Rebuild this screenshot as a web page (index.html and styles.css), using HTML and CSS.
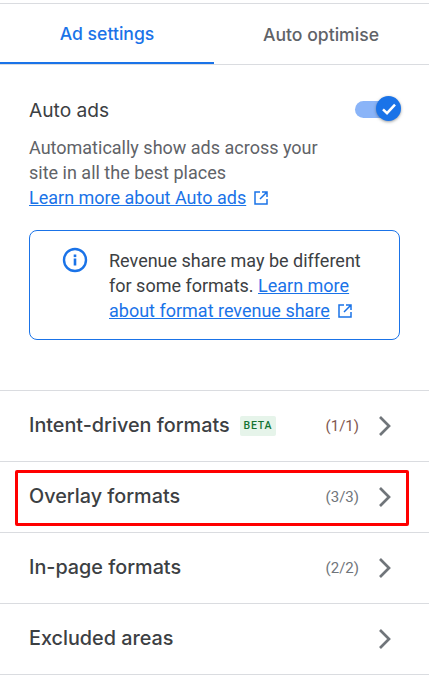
FILE: index.html

```html
<!DOCTYPE html>
<html lang="en">
<head>
<meta charset="UTF-8" />
<meta name="viewport" content="width=device-width, initial-scale=1" />
<title>Ad settings</title>
<link rel="stylesheet" href="styles.css">
</head>
<body>
<div class="tabs">
  <div class="tab active">Ad settings</div>
  <div class="tab">Auto optimise</div>
</div>

<div class="auto-ads">
  <div class="auto-head">
    <div class="auto-title">Auto ads</div>
    <div class="toggle">
      <div class="toggle-track"></div>
      <div class="toggle-knob">
        <svg width="18" height="18" viewBox="0 0 18 18"><path d="M3 9.4 7 13.2 15 4.6" fill="none" stroke="#fff" stroke-width="2.5"/></svg>
      </div>
    </div>
  </div>
  <p class="desc">Automatically show ads across your<br>site in all the best places<br><a href="#">Learn more about Auto ads</a><svg class="ext" width="14" height="14" viewBox="0 0 14 14"><path d="M6 1H1v12h12V8M8 1h5v5M13 1 6 8" fill="none" stroke="#1a73e8" stroke-width="1.5"/></svg></p>
  <div class="notice">
    <svg class="info" width="26" height="26" viewBox="0 0 26 26"><circle cx="13" cy="13" r="11" fill="none" stroke="#1a73e8" stroke-width="2.4"/><rect x="11.7" y="11.5" width="2.6" height="7" fill="#1a73e8"/><rect x="11.7" y="7.5" width="2.6" height="2.6" fill="#1a73e8"/></svg>
    <p>Revenue share may be different for some formats. <a href="#">Learn more about format revenue share</a><svg class="ext" width="14" height="14" viewBox="0 0 14 14"><path d="M6 1H1v12h12V8M8 1h5v5M13 1 6 8" fill="none" stroke="#1a73e8" stroke-width="1.5"/></svg></p>
  </div>
</div>

<div class="formats">
  <div class="row">
    <span class="row-name">Intent-driven formats</span>
    <span class="beta">BETA</span>
    <span class="count count-warn">(1/1)</span>
    <svg class="chev" width="14" height="22" viewBox="0 0 14 22"><path d="M2 2 11 11 2 20" fill="none" stroke="#70757a" stroke-width="2.7"/></svg>
  </div>
  <div class="row highlighted">
    <span class="row-name">Overlay formats</span>
    <span class="count">(3/3)</span>
    <svg class="chev" width="14" height="22" viewBox="0 0 14 22"><path d="M2 2 11 11 2 20" fill="none" stroke="#70757a" stroke-width="2.7"/></svg>
  </div>
  <div class="row">
    <span class="row-name">In-page formats</span>
    <span class="count">(2/2)</span>
    <svg class="chev" width="14" height="22" viewBox="0 0 14 22"><path d="M2 2 11 11 2 20" fill="none" stroke="#70757a" stroke-width="2.7"/></svg>
  </div>
  <div class="row">
    <span class="row-name">Excluded areas</span>
    <svg class="chev" width="14" height="22" viewBox="0 0 14 22"><path d="M2 2 11 11 2 20" fill="none" stroke="#70757a" stroke-width="2.7"/></svg>
  </div>
</div>
</body>
</html>
```

FILE: styles.css

```css
body { margin: 0; padding-top: 3px; background: #fff; font-family: Roboto, "Liberation Sans", sans-serif; color: #3c4043; }
a { color: #1a73e8; text-decoration: underline; }

.tabs { display: flex; height: 60px; border-top: 1px solid #dadce0; border-bottom: 1px solid #dadce0; }
.tab { width: 214px; box-sizing: border-box; display: flex; align-items: center; justify-content: center; font-family: Inter, Roboto, sans-serif; font-size: 17.6px; font-weight: 500; color: #5f6368; }
.tab.active { color: #1a73e8; border-bottom: 2px solid #1a73e8; }

.auto-ads { padding: 29px 29px 0; height: 325px; box-sizing: border-box; }
.auto-head { display: flex; justify-content: space-between; align-items: center; height: 30px; }
.auto-title { margin-top: 2px; font-family: Inter, Roboto, sans-serif; font-size: 19.2px; color: #3c4043; }
.toggle { position: relative; width: 46px; height: 26px; margin-right: -1px; }
.toggle-track { position: absolute; left: 0; top: 5px; width: 38px; height: 17px; border-radius: 9px; background: #8ab4f8; }
.toggle-knob { position: absolute; left: 21px; top: 0; width: 25px; height: 25px; border-radius: 50%; background: #1a73e8; box-shadow: 0 1px 3px rgba(60,64,67,.5); display: flex; align-items: center; justify-content: center; }

.desc { margin: 11px 0 0; font-size: 18px; line-height: 25px; color: #5f6368; }
.ext { margin-left: 8px; vertical-align: -1px; }

.notice { margin-top: 20px; border: 1px solid #1a73e8; border-radius: 8px; height: 110px; box-sizing: border-box; display: flex; padding: 16px 20px 0 32px; }
.notice p { margin: 1px 0 0; font-size: 18px; line-height: 25px; color: #3c4043; }
.info { flex: none; margin-right: 21px; }

.formats { border-top: 1px solid #dadce0; }
.row { position: relative; display: flex; align-items: center; height: 70px; padding: 0 37px 0 29px; border-bottom: 1px solid #dadce0; }
.row-name { margin-bottom: 2px; font-family: Inter, Roboto, sans-serif; font-size: 19.8px; font-weight: 500; color: #3c4043; }
.beta { margin-left: 10px; padding: 0 4px; height: 20px; line-height: 20px; background: #e6f4ea; border-radius: 2px; font-size: 10.5px; font-weight: 500; letter-spacing: 0.8px; color: #137333; }
.count { margin-left: auto; font-size: 15px; color: #70757a; }
.count-warn { color: #80574f; }
.chev { margin-left: 19px; flex: none; }
.row > .row-name + .chev { margin-left: auto; }
.highlighted::after { content: ""; position: absolute; left: 15px; top: 8px; width: 388px; height: 50px; border: 3px solid #f00; border-radius: 2px; }
```
